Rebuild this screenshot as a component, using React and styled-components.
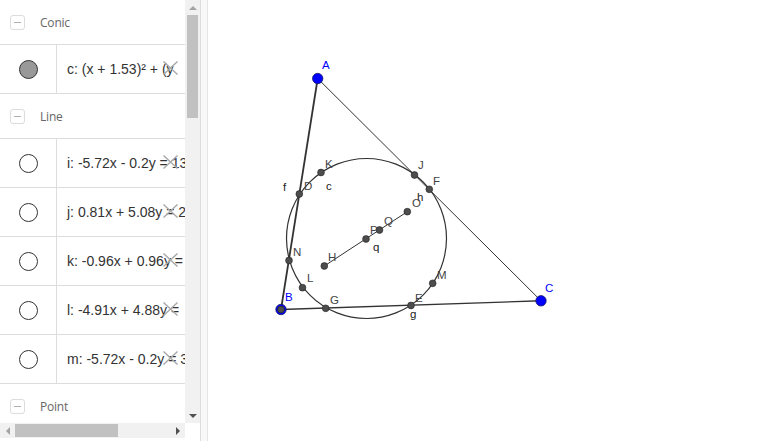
import React from 'react';
import styled, { createGlobalStyle } from 'styled-components';

const GlobalStyle = createGlobalStyle`
  html, body {
    margin: 0;
    padding: 0;
    background: #fff;
    font-family: "Open Sans", "Liberation Sans", sans-serif;
  }
`;

const Page = styled.div`
  display: flex;
  width: 100vw;
  height: 100vh;
  overflow: hidden;
  background: #fff;
`;

const AlgebraPanel = styled.div`
  width: 200px;
  flex-shrink: 0;
  display: grid;
  grid-template-columns: 185px 15px;
  grid-template-rows: 423px 15px;
  align-content: start;
`;

const ListArea = styled.div`
  overflow: hidden;
`;

const GroupHeader = styled.div`
  height: 44px;
  border-bottom: 1px solid #dddddd;
  display: flex;
  align-items: center;
  padding-left: 10px;
  gap: 15px;
`;

const CollapseButton = styled.div`
  width: 13px;
  height: 13px;
  border: 1px solid #dcdcdc;
  border-radius: 3px;
  display: flex;
  align-items: center;
  justify-content: center;
  margin-top: 1px;

  &::after {
    content: '';
    width: 7px;
    height: 1px;
    background: #b0b0b0;
  }
`;

const GroupTitle = styled.span`
  font-size: 12px;
  color: #666;
  letter-spacing: -0.2px;
`;

const ItemRow = styled.div`
  height: 48px;
  border-bottom: 1px solid #dddddd;
  display: flex;
`;

const MarbleCell = styled.div`
  width: 56px;
  border-right: 1px solid #dddddd;
  display: flex;
  align-items: center;
  justify-content: center;
`;

const Marble = styled.div`
  width: 17px;
  height: 17px;
  border-radius: 50%;
  border: 1.5px solid #333;
  background: ${p => (p.$filled ? '#999999' : '#ffffff')};
`;

const Formula = styled.div`
  flex: 1;
  position: relative;
  overflow: hidden;
  white-space: nowrap;
  display: flex;
  align-items: center;
  padding-left: 10px;
  font-family: "Liberation Sans", Arial, sans-serif;
  font-size: 14px;
  color: #333;
`;

const DeleteIcon = styled.svg`
  position: absolute;
  right: 6px;
  top: 50%;
  margin-top: -9px;
  width: 17px;
  height: 16px;
`;

const VScroll = styled.div`
  background: #f1f1f1;
  display: flex;
  flex-direction: column;
  align-items: center;
`;

const HScroll = styled.div`
  background: #f1f1f1;
  display: flex;
  align-items: center;
`;

const Corner = styled.div`
  background: #fff;
`;

const ArrowBox = styled.div`
  width: 15px;
  height: 15px;
  flex-shrink: 0;
  display: flex;
  align-items: center;
  justify-content: center;

  &::after {
    content: '';
    width: 0;
    height: 0;
    ${p => p.$dir === 'up' && `
      border-left: 4px solid transparent;
      border-right: 4px solid transparent;
      border-bottom: 4px solid ${p.$color};
    `}
    ${p => p.$dir === 'down' && `
      border-left: 4px solid transparent;
      border-right: 4px solid transparent;
      border-top: 4px solid ${p.$color};
    `}
    ${p => p.$dir === 'left' && `
      border-top: 4px solid transparent;
      border-bottom: 4px solid transparent;
      border-right: 4px solid ${p.$color};
    `}
    ${p => p.$dir === 'right' && `
      border-top: 4px solid transparent;
      border-bottom: 4px solid transparent;
      border-left: 4px solid ${p.$color};
    `}
  }
`;

const VThumb = styled.div`
  width: 11px;
  height: 103px;
  background: #c1c1c1;
`;

const HThumb = styled.div`
  width: 103px;
  height: 13px;
  background: #c1c1c1;
`;

const Spacer = styled.div`
  flex: 1;
`;

const Divider = styled.div`
  width: 6px;
  flex-shrink: 0;
  background: #f8f8f8;
  border-left: 1px solid #dcdcdc;
  border-right: 1px solid #e6e6e6;
`;

const Canvas = styled.div`
  flex: 1;
  position: relative;
  background: #fff;
`;

const Board = styled.svg`
  display: block;
  width: 100%;
  height: 100%;
`;

const groups = [
  {
    title: 'Conic',
    items: [{ text: 'c: (x + 1.53)² + (y', filled: true }],
  },
  {
    title: 'Line',
    items: [
      { text: 'i: -5.72x - 0.2y = 13' },
      { text: 'j: 0.81x + 5.08y = 2' },
      { text: 'k: -0.96x + 0.96y = ' },
      { text: 'l: -4.91x + 4.88y = ' },
      { text: 'm: -5.72x - 0.2y = 3' },
    ],
  },
  { title: 'Point', items: [] },
];

const bluePoints = [
  { n: 'A', x: 317.7, y: 78.5, lx: 322, ly: 69 },
  { n: 'C', x: 541, y: 300.8, lx: 545, ly: 292 },
];

const darkPoints = [
  { n: 'K', x: 321, y: 172.5, lx: 325, ly: 168 },
  { n: 'D', x: 299.3, y: 194, lx: 304, ly: 190 },
  { n: 'J', x: 414.5, y: 175, lx: 418, ly: 169 },
  { n: 'F', x: 429.3, y: 189.3, lx: 433, ly: 185 },
  { n: 'O', x: 407.3, y: 211.7, lx: 412, ly: 207 },
  { n: 'Q', x: 379.5, y: 230, lx: 384, ly: 225 },
  { n: 'P', x: 366, y: 239, lx: 370, ly: 234 },
  { n: 'H', x: 324.3, y: 266, lx: 328, ly: 261 },
  { n: 'N', x: 289, y: 260.5, lx: 293, ly: 256 },
  { n: 'L', x: 302.5, y: 287.7, lx: 307, ly: 282 },
  { n: 'G', x: 325.7, y: 308.3, lx: 330, ly: 304 },
  { n: 'E', x: 411, y: 305.5, lx: 415, ly: 302 },
  { n: 'M', x: 432.7, y: 283.3, lx: 437, ly: 279 },
];

const lineLabels = [
  { n: 'f', x: 283, y: 191 },
  { n: 'c', x: 326, y: 190 },
  { n: 'h', x: 417, y: 201 },
  { n: 'q', x: 373, y: 251 },
  { n: 'g', x: 410, y: 318 },
];

const labelFont = '"Liberation Sans", Arial, sans-serif';

const Construction = () => (
  <Board>
    <g transform="translate(-208 0)" fontFamily={labelFont} fontSize="11.5">
      <circle cx="366.5" cy="238.5" r="80" fill="none" stroke="#333" strokeWidth="1.2" />
      <line x1="317.7" y1="78.5" x2="281" y2="309.5" stroke="#333" strokeWidth="1.8" />
      <line x1="317.7" y1="78.5" x2="541" y2="300.8" stroke="#333" strokeWidth="1" />
      <line x1="281" y1="309.5" x2="541" y2="300.8" stroke="#333" strokeWidth="1.4" />
      <line x1="324.3" y1="266" x2="407.3" y2="211.7" stroke="#333" strokeWidth="1" />

      {lineLabels.map(l => (
        <text key={l.n} x={l.x} y={l.y} fill="#222">{l.n}</text>
      ))}

      {darkPoints.map(p => (
        <g key={p.n}>
          <circle cx={p.x} cy={p.y} r="3.4" fill="#4d4d4d" stroke="#222" strokeWidth="0.6" />
          <text x={p.lx} y={p.ly} fill="#444">{p.n}</text>
        </g>
      ))}

      {bluePoints.map(p => (
        <g key={p.n}>
          <circle cx={p.x} cy={p.y} r="5.2" fill="#0000ff" stroke="#1a1a66" strokeWidth="0.8" />
          <text x={p.lx} y={p.ly} fill="#0000ff">{p.n}</text>
        </g>
      ))}

      <circle cx="281" cy="309.5" r="5.2" fill="#0000ff" stroke="#1a1a66" strokeWidth="0.8" />
      <circle cx="281" cy="309.5" r="3.4" fill="#4d4d4d" stroke="#222" strokeWidth="0.6" />
      <text x="285" y="301" fill="#0000ff">B</text>
    </g>
  </Board>
);

const Cross = () => (
  <DeleteIcon viewBox="0 0 17 16">
    <path d="M1.5 1.5 L15.5 14.5 M15.5 1.5 L1.5 14.5" stroke="#aaaaaa" strokeWidth="1.5" fill="none" />
  </DeleteIcon>
);

export default function App() {
  return (
    <Page>
      <GlobalStyle />
      <AlgebraPanel>
        <ListArea>
          {groups.map(g => (
            <React.Fragment key={g.title}>
              <GroupHeader>
                <CollapseButton />
                <GroupTitle>{g.title}</GroupTitle>
              </GroupHeader>
              {g.items.map(item => (
                <ItemRow key={item.text}>
                  <MarbleCell>
                    <Marble $filled={item.filled} />
                  </MarbleCell>
                  <Formula>
                    {item.text}
                    <Cross />
                  </Formula>
                </ItemRow>
              ))}
            </React.Fragment>
          ))}
        </ListArea>
        <VScroll>
          <ArrowBox $dir="up" $color="#a3a3a3" />
          <VThumb />
          <Spacer />
          <ArrowBox $dir="down" $color="#505050" />
        </VScroll>
        <HScroll>
          <ArrowBox $dir="left" $color="#a3a3a3" />
          <HThumb />
          <Spacer />
          <ArrowBox $dir="right" $color="#505050" />
        </HScroll>
        <Corner />
      </AlgebraPanel>
      <Divider />
      <Canvas>
        <Construction />
      </Canvas>
    </Page>
  );
}
